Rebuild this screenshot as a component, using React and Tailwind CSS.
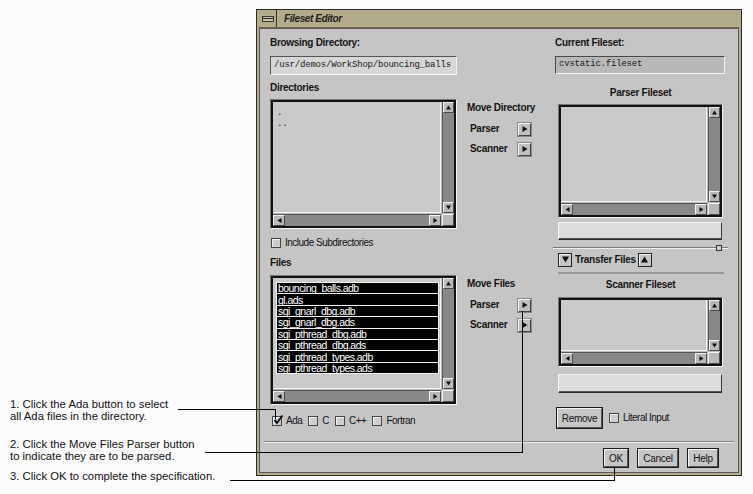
import React from "react";

const lbl = "text-[10px] font-bold leading-[14px] tracking-[-0.3px] text-[#141414] whitespace-nowrap";
const txt = "text-[10px] leading-[14px] tracking-[-0.5px] text-[#141414] whitespace-nowrap";
const mono = "font-['Liberation_Mono',monospace] text-[9px] tracking-[-0.2px] text-[#1a1a1a] whitespace-nowrap";

const Tri = ({ dir, size = 6 }) => {
  const pts = {
    up: "3,0.5 6,5.5 0,5.5",
    down: "0,0.5 6,0.5 3,5.5",
    right: "0.5,0 5.5,3 0.5,6",
    left: "5.5,0 0.5,3 5.5,6",
  }[dir];
  return (
    <svg width={size} height={size} viewBox="0 0 6 6">
      <polygon points={pts} fill="#111" />
    </svg>
  );
};

const btnBevel =
  "shrink-0 flex items-center justify-center bg-[#b9b9b9] border border-t-[#f2f2f2] border-l-[#f2f2f2] border-b-[#4a4a4a] border-r-[#4a4a4a]";

const ListBox = ({ className, children }) => (
  <div className={`flex border border-t-[#777] border-l-[#777] border-b-[#f6f6f6] border-r-[#f6f6f6] ${className}`}>
    <div className="flex-1 flex flex-col border-2 border-[#121212] bg-[#bdbdbd]">
      <div className="flex-1 flex min-h-0">
        <div className="flex-1 min-w-0 bg-[#c9c9c9] border-b border-r border-[#f4f4f4] overflow-hidden">{children}</div>
        <div className="w-[12px] shrink-0 self-stretch ml-px flex flex-col border-l border-[#555] bg-[#888] shadow-[inset_0_0_0_12px_#888]">
          <div className={`h-[11px] ${btnBevel}`}>
            <Tri dir="up" size={5} />
          </div>
          <div className="flex-1 bg-[#888]" />
          <div className={`h-[11px] ${btnBevel}`}>
            <Tri dir="down" size={5} />
          </div>
        </div>
      </div>
      <div className="h-[12px] shrink-0 mt-px flex">
        <div className="flex-1 flex border-t border-[#555] bg-[#888] shadow-[inset_0_0_0_12px_#888]">
          <div className={`w-[12px] ${btnBevel}`}>
            <Tri dir="left" size={5} />
          </div>
          <div className="flex-1 bg-[#888]" />
          <div className={`w-[12px] ${btnBevel}`}>
            <Tri dir="right" size={5} />
          </div>
        </div>
        <div className={`w-[12px] ml-px ${btnBevel}`} />
      </div>
    </div>
  </div>
);

const Check = ({ checked }) => (
  <div className="relative w-[10px] h-[10px] shrink-0 border border-[#444] bg-[#cecece] shadow-[inset_1px_1px_0_#f4f4f4]">
    {checked && (
      <svg className="absolute -top-[3px] left-0" width="11" height="11" viewBox="0 0 11 11">
        <path d="M1.5 6 L4 9 L9.5 1.5" stroke="#111" strokeWidth="2" fill="none" />
      </svg>
    )}
  </div>
);

const CheckItem = ({ label, checked }) => (
  <div className="flex items-center gap-[4px]">
    <Check checked={checked} />
    <span className={txt}>{label}</span>
  </div>
);

const ArrowBtn = ({ dir, className = "" }) => (
  <div className={`w-[13px] h-[13px] flex items-center justify-center bg-[#bfbfbf] border border-t-[#f4f4f4] border-l-[#f4f4f4] border-b-[#444] border-r-[#444] shadow-[0_0_0_1px_#8a8a8a] ${className}`}>
    <Tri dir={dir} size={6} />
  </div>
);

const MoveRow = ({ label, className = "" }) => (
  <div className={`flex items-center h-[14px] pl-[3px] ${className}`}>
    <span className={`${lbl} w-[48px]`}>{label}</span>
    <ArrowBtn dir="right" />
  </div>
);

const Button = ({ label, className }) => (
  <div className={`flex border border-[#1a1a1a] ${className}`}>
    <div className="flex-1 flex items-center justify-center bg-[#c6c6c6] border border-t-[#f4f4f4] border-l-[#f4f4f4] border-b-[#555] border-r-[#555]">
      <span className="text-[10px] tracking-[-0.3px] text-[#141414]">{label}</span>
    </div>
  </div>
);

const files = [
  "bouncing_balls.adb",
  "gl.ads",
  "sgi_gnarl_dbg.adb",
  "sgi_gnarl_dbg.ads",
  "sgi_pthread_dbg.adb",
  "sgi_pthread_dbg.ads",
  "sgi_pthread_types.adb",
  "sgi_pthread_types.ads",
];

const TextField = ({ className }) => (
  <div className={`bg-[#dcdcdc] border border-t-[#f6f6f6] border-l-[#f6f6f6] border-b-[#2a2a2a] border-r-[#3a3a3a] shadow-[inset_0_-1px_0_#555] ${className}`} />
);

export default function App() {
  return (
    <div className="relative w-[753px] h-[494px] bg-[#fcfcfc] flex font-['Liberation_Sans',Arial,sans-serif] overflow-hidden">
      {/* annotations */}
      <div className="w-[256px] shrink-0 pl-[10px] pt-[398px] text-[11.3px] leading-[12px] text-[#111]">
        <p>1. Click the Ada button to select</p>
        <p>all Ada files in the directory.</p>
        <p className="mt-[16px]">2. Click the Move Files Parser button</p>
        <p>to indicate they are to be parsed.</p>
        <p className="mt-[8px]">3. Click OK to complete the specification.</p>
      </div>

      {/* window */}
      <div className="mt-[9px] w-[486px] h-[467px] flex flex-col border border-[#2a2a2a] bg-[#b4ab8b] px-[2px] pb-[2px]">
        <div className="h-[18px] shrink-0 flex items-center border-b border-[#6d6650]">
          <div className="w-[12px] h-[6px] ml-[3px] border border-[#333] bg-[#cfc7a8] flex items-center">
            <div className="w-full h-px bg-[#222]" />
          </div>
          <div className="w-px h-full bg-[#333] ml-[2px]" />
          <span className="ml-[7px] text-[10px] font-bold italic tracking-[-0.4px] text-[#1e1e1e]">Fileset Editor</span>
        </div>

        <div className="flex-1 flex flex-col bg-[#c5c5c5] border border-[#5a5a5a]">
          <div className="flex pl-[10px] pt-[7px]">
            {/* left column */}
            <div className="w-[187px] flex flex-col">
              <div className={lbl}>Browsing Directory:</div>
              <div className="mt-[6px] h-[19px] flex items-center pl-[3px] bg-[#d6d6d6] border border-t-[#555] border-l-[#555] border-b-[#f4f4f4] border-r-[#f4f4f4]">
                <span className={mono}>/usr/demos/WorkShop/bouncing_balls</span>
              </div>
              <div className={`${lbl} mt-[6px]`}>Directories</div>
              <ListBox className="mt-[4px] w-[187px] h-[130px]">
                <div className={`${mono} pl-[4px] pt-[6px] leading-[11px]`}>
                  <div>.</div>
                  <div>..</div>
                </div>
              </ListBox>
              <div className="mt-[7px] h-[14px] pl-[1px] flex items-center">
                <CheckItem label="Include Subdirectories" />
              </div>
              <div className={`${lbl} mt-[6px]`}>Files</div>
              <ListBox className="mt-[5px] w-[187px] h-[130px]">
                <div className="ml-[3px] mt-[4px] w-[163px] bg-[#f2f2f2] p-px flex flex-col gap-px">
                  {files.map((f) => (
                    <div key={f} className="h-[10.4px] bg-black flex items-center pl-[1px]">
                      <span className="text-[10.5px] leading-[10px] tracking-[-0.55px] text-white whitespace-nowrap">{f}</span>
                    </div>
                  ))}
                </div>
              </ListBox>
              <div className="mt-[9px] h-[14px] pl-[2px] flex items-center gap-[6px]">
                <CheckItem label="Ada" checked />
                <CheckItem label="C" />
                <CheckItem label="C++" />
                <CheckItem label="Fortran" />
              </div>
            </div>

            {/* middle column */}
            <div className="w-[86px] ml-[10px] flex flex-col">
              <div className={`${lbl} mt-[65px]`}>Move Directory</div>
              <MoveRow label="Parser" className="mt-[7px]" />
              <MoveRow label="Scanner" className="mt-[6px]" />
              <div className={`${lbl} mt-[121px]`}>Move Files</div>
              <MoveRow label="Parser" className="mt-[7px]" />
              <MoveRow label="Scanner" className="mt-[6px]" />
            </div>

            {/* right column */}
            <div className="w-[175px] flex flex-col">
              <div className={`${lbl} pl-[2px]`}>Current Fileset:</div>
              <div className="mt-[6px] ml-[2px] w-[170px] h-[18px] flex items-center pl-[3px] bg-[#b8b8b8] border border-t-[#4a4a4a] border-l-[#4a4a4a] border-b-[#f2f2f2] border-r-[#f2f2f2]">
                <span className={mono}>cvstatic.fileset</span>
              </div>
              <div className={`${lbl} mt-[12px] pl-[5px] w-[170px] text-center`}>Parser Fileset</div>
              <ListBox className="mt-[4px] ml-[5px] w-[165px] h-[114px]" />
              <TextField className="mt-[4px] ml-[5px] w-[164px] h-[18px]" />
              <div className="relative mt-[6px] h-[3px] w-full">
                <div className="absolute left-0 right-0 top-px h-px bg-[#7a7a7a] shadow-[0_1px_0_#efefef]" />
                <div className="absolute right-[6px] -top-[1px] w-[6px] h-[6px] border border-[#333] bg-[#d0d0d0]" />
              </div>
              <div className="mt-[3px] ml-[5px] h-[15px] flex items-center">
                <div className="w-[14px] h-[14px] flex items-center justify-center border border-[#222] bg-[#c4c4c4] shadow-[inset_1px_1px_0_#f2f2f2]">
                  <Tri dir="down" size={7} />
                </div>
                <span className={`${lbl} ml-[3px]`}>Transfer Files</span>
                <div className="ml-[2px] w-[14px] h-[14px] flex items-center justify-center border border-[#222] bg-[#c4c4c4] shadow-[inset_1px_1px_0_#f2f2f2]">
                  <Tri dir="up" size={7} />
                </div>
              </div>
              <div className="mt-[5px] ml-[5px] w-[166px] h-[2px] bg-[#9a9a9a]" />
              <div className={`${lbl} mt-[4px] pl-[5px] w-[170px] text-center`}>Scanner Fileset</div>
              <ListBox className="mt-[5px] ml-[5px] w-[165px] h-[70px]" />
              <TextField className="mt-[7px] ml-[5px] w-[164px] h-[19px]" />
              <div className="mt-[14px] ml-[3px] flex items-center">
                <Button label="Remove" className="w-[47px] h-[22px]" />
                <div className="ml-[6px]">
                  <CheckItem label="Literal Input" />
                </div>
              </div>
            </div>
          </div>

          <div className="mt-[12px] mx-[4px] h-px bg-[#858585] shadow-[0_1px_0_#eeeeee]" />
          <div className="mt-[6px] flex justify-end gap-[8px] pr-[19px]">
            <Button label="OK" className="w-[26px] h-[20px]" />
            <Button label="Cancel" className="w-[42px] h-[20px]" />
            <Button label="Help" className="w-[32px] h-[20px]" />
          </div>
        </div>
      </div>

      {/* leader lines */}
      <div className="absolute left-[178px] top-[409px] w-[98px] h-px bg-black" />
      <div className="absolute left-[275px] top-[409px] w-px h-[10px] bg-black" />
      <div className="absolute left-[205px] top-[452px] w-[318px] h-px bg-black" />
      <div className="absolute left-[522px] top-[311px] w-px h-[142px] bg-black" />
      <div className="absolute left-[230px] top-[480px] w-[385px] h-px bg-black" />
      <div className="absolute left-[614px] top-[468px] w-px h-[13px] bg-black" />
    </div>
  );
}
